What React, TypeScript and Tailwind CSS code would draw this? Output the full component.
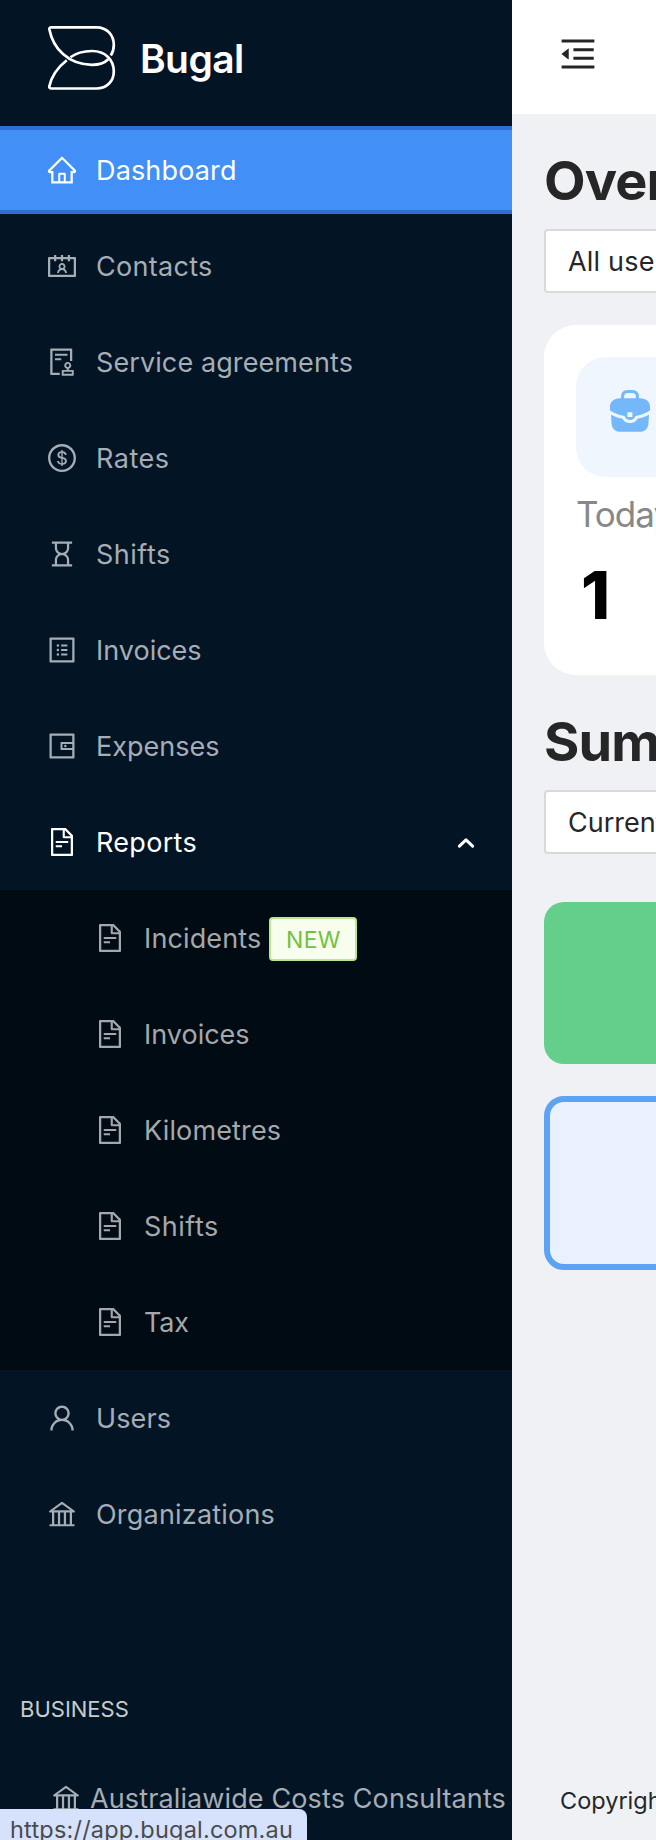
import React from "react";
import {
  AiOutlineHome,
  AiOutlineContacts,
  AiOutlineAudit,
  AiOutlineDollar,
  AiOutlineHourglass,
  AiOutlineProfile,
  AiOutlineWallet,
  AiOutlineFileText,
  AiOutlineUser,
  AiOutlineBank,
  AiOutlineMenuFold,
} from "react-icons/ai";

type Icon = React.ComponentType<{ className?: string }>;

function Logo() {
  return (
    <svg viewBox="0 0 70 66" className="h-[66px] w-[70px] shrink-0" fill="none" stroke="#fff" strokeWidth="2.7" strokeLinejoin="round" strokeLinecap="butt">
      <path d="M19.8 35.2C11 42 4.6 51 2.3 61.4C2.1 62.7 2.9 63.5 4.2 63.5H49.5C60 63.5 66.8 56 66.8 46.5C66.8 35 58.5 26 45 26C37 26 29 28 23.4 32.3" />
      <path d="M63.8 30.6C65.8 27.6 66.8 23.5 66.8 20C66.8 10 60 2.3 49.5 2.3H4.2C2.9 2.3 2.2 3.1 2.4 4.4C6 23 21 39.8 45 39.8C52 39.8 57.5 38 61.2 34.2" />
    </svg>
  );
}

function Briefcase() {
  return (
    <svg viewBox="0 0 40 42" className="h-[42px] w-10" fill="#74b8fa">
      <path d="M12.6 9.5V6.6Q12.6 1.6 17.6 1.6H22.4Q27.4 1.6 27.4 6.6V9.5" fill="none" stroke="#74b8fa" strokeWidth="3" />
      <path
        fillRule="evenodd"
        d="M10 8.2H30C36.5 8.2 40 11.8 40 16.6V20.4C36 23 31.5 24.8 26.6 25.7C25.6 25.9 25 26.4 24.7 27.3C24 29.2 22.3 30 20 30C17.7 30 16 29.2 15.3 27.3C15 26.4 14.4 25.9 13.4 25.7C8.5 24.8 4 23 0 20.4V16.6C0 11.8 3.5 8.2 10 8.2ZM17.4 22.2V26.9H22.4V22.2Z"
      />
      <path d="M1 24.8C4.6 26.7 8.5 28 12.6 28.7C13.6 31.5 16.3 33 20 33C23.7 33 26.4 31.5 27.4 28.7C31.5 28 35.4 26.7 39 24.8L38.5 33C38.1 38.7 35 41.8 29.5 41.8H10.5C5 41.8 1.9 38.7 1.5 33Z" />
    </svg>
  );
}

function Chevron() {
  return (
    <svg viewBox="0 0 18 12" className="h-3 w-[18px]" fill="none" stroke="#fff" strokeWidth="3" strokeLinecap="round" strokeLinejoin="round">
      <path d="M2.4 9.2L9 2.8L15.6 9.2" />
    </svg>
  );
}

type ItemProps = {
  icon: Icon;
  label: string;
  tracking?: string;
  tone?: string;
  indent?: string;
  children?: React.ReactNode;
};

function Item({ icon: I, label, tracking = "tracking-normal", tone = "text-[#a6adb4]", indent = "pl-[46px]", children }: ItemProps) {
  return (
    <li className={`flex h-24 items-center ${indent} ${tone}`}>
      <I className="size-8 shrink-0" />
      <span className={`ml-[18px] pt-0.5 text-[27px] leading-10 whitespace-nowrap ${tracking}`}>{label}</span>
      {children}
    </li>
  );
}

const reports = [
  { label: "Invoices", tracking: "tracking-normal" },
  { label: "Kilometres", tracking: "tracking-[0.15px]" },
  { label: "Shifts", tracking: "tracking-[0.5px]" },
  { label: "Tax", tracking: "tracking-[-0.2px]" },
];

function Select({ label, tracking }: { label: string; tracking: string }) {
  return (
    <div className={`flex h-16 w-[300px] items-center rounded-[4px] border-2 border-[#d9d9d9] bg-white pl-[22px] pt-0.5 text-[27px] text-[#262626] ${tracking}`}>
      {label}
    </div>
  );
}

export default function App() {
  return (
    <div className="relative flex h-[1840px] w-[656px] overflow-hidden bg-[#f0f1f5] font-['Inter',sans-serif]">
      <aside className="flex w-[512px] shrink-0 flex-col bg-[#031425]">
        <div className="flex h-[122px] pl-[47px] pt-[25px]">
          <Logo />
          <span className="ml-[23px] mt-2 text-[39px] font-semibold leading-[52px] tracking-[-0.6px] text-white">Bugal</span>
        </div>
        <ul>
          <li className="my-1 flex h-[88px] items-center border-y-4 border-[#2e6fd6] bg-[#418ff7] pl-[46px] text-white">
            <AiOutlineHome className="size-8" />
            <span className="ml-[18px] pt-0.5 text-[27px] leading-10 tracking-[0.15px]">Dashboard</span>
          </li>
          <Item icon={AiOutlineContacts} label="Contacts" tracking="tracking-[0.3px]" />
          <Item icon={AiOutlineAudit} label="Service agreements" tracking="tracking-[0.1px]" />
          <Item icon={AiOutlineDollar} label="Rates" tracking="tracking-[0.5px]" />
          <Item icon={AiOutlineHourglass} label="Shifts" tracking="tracking-[0.5px]" />
          <Item icon={AiOutlineProfile} label="Invoices" />
          <Item icon={AiOutlineWallet} label="Expenses" />
          <Item icon={AiOutlineFileText} label="Reports" tone="text-white" tracking="tracking-[0.3px]">
            <span className="ml-auto mr-[37px] pt-0.5">
              <Chevron />
            </span>
          </Item>
        </ul>
        <ul className="bg-[#010b14]">
          <Item icon={AiOutlineFileText} label="Incidents" tone="text-[#a5a8ab]" indent="pl-[94px]" tracking="tracking-[0.13px]">
            <span className="ml-2 mt-0.5 flex h-11 w-[88px] items-center justify-center rounded-[4px] border-2 border-[#bce590] bg-[#f7feee] pt-0.5 text-[23px] tracking-[0.3px] text-[#73c140]">
              NEW
            </span>
          </Item>
          {reports.map((r) => (
            <Item key={r.label} icon={AiOutlineFileText} label={r.label} tracking={r.tracking} tone="text-[#a5a8ab]" indent="pl-[94px]" />
          ))}
        </ul>
        <ul>
          <Item icon={AiOutlineUser} label="Users" tracking="tracking-[0.1px]" />
          <Item icon={AiOutlineBank} label="Organizations" tracking="tracking-[0.2px]" />
        </ul>
        <h2 className="mt-[131px] pl-5 text-[22px] leading-8 text-[#c9cbcd]">BUSINESS</h2>
        <div className="mt-[56px] flex items-center pl-[50px] text-[#a6adb4]">
          <AiOutlineBank className="size-8 shrink-0" />
          <span className="ml-2 pt-0.5 text-[27px] leading-8 tracking-[0.12px] whitespace-nowrap">Australiawide Costs Consultants</span>
        </div>
      </aside>

      <main className="flex min-w-0 flex-1 flex-col">
        <header className="flex h-[114px] shrink-0 items-start bg-white pl-[45px] pt-[33px] text-[#262626]">
          <AiOutlineMenuFold className="size-[42px] shrink-0" />
        </header>
        <div className="flex w-[300px] flex-1 flex-col pl-8">
          <h1 className="mt-[34px] text-[54px] font-bold leading-[66px] tracking-[-0.9px] text-[#262626]">Overview</h1>
          <div className="mt-[15px]">
            <Select label="All users" tracking="tracking-[0.2px]" />
          </div>
          <section className="mt-8 h-[350px] w-[300px] shrink-0 rounded-[32px] bg-white pl-8 pt-8">
            <div className="h-[120px] w-[200px] rounded-[30px] bg-[#eff6fd] pl-[34px] pt-[33px]">
              <Briefcase />
            </div>
            <p className="mt-[15px] text-[35px] leading-[44px] tracking-[-1px] text-[#888888]">Today</p>
            <p className="mt-[33px] pl-[5px] text-[66px] font-extrabold leading-[52px] text-black">1</p>
          </section>
          <h1 className="mt-[34px] text-[54px] font-bold leading-[66px] tracking-[-0.9px] text-[#262626]">Summary</h1>
          <div className="mt-[15px]">
            <Select label="Current" tracking="tracking-normal" />
          </div>
          <div className="mt-12 h-[162px] w-[300px] shrink-0 rounded-[20px] bg-[#63cf8a]" />
          <div className="mt-8 h-[174px] w-[300px] shrink-0 rounded-[20px] border-[6px] border-[#5ca2f5] bg-[#e9f1fe]" />
          <footer className="mt-auto pb-[23px] pl-4 text-[23.5px] leading-8 text-[#262626]">Copyright</footer>
        </div>
      </main>

      <div className="absolute bottom-0 left-0 h-[31px] w-[307px] overflow-hidden rounded-tr-[8px] bg-[#d6e2fc] pl-2.5 pt-[5px] text-[23.5px] leading-8 tracking-[0.2px] text-[#4a4b4e]">
        https://app.bugal.com.au
      </div>
    </div>
  );
}
